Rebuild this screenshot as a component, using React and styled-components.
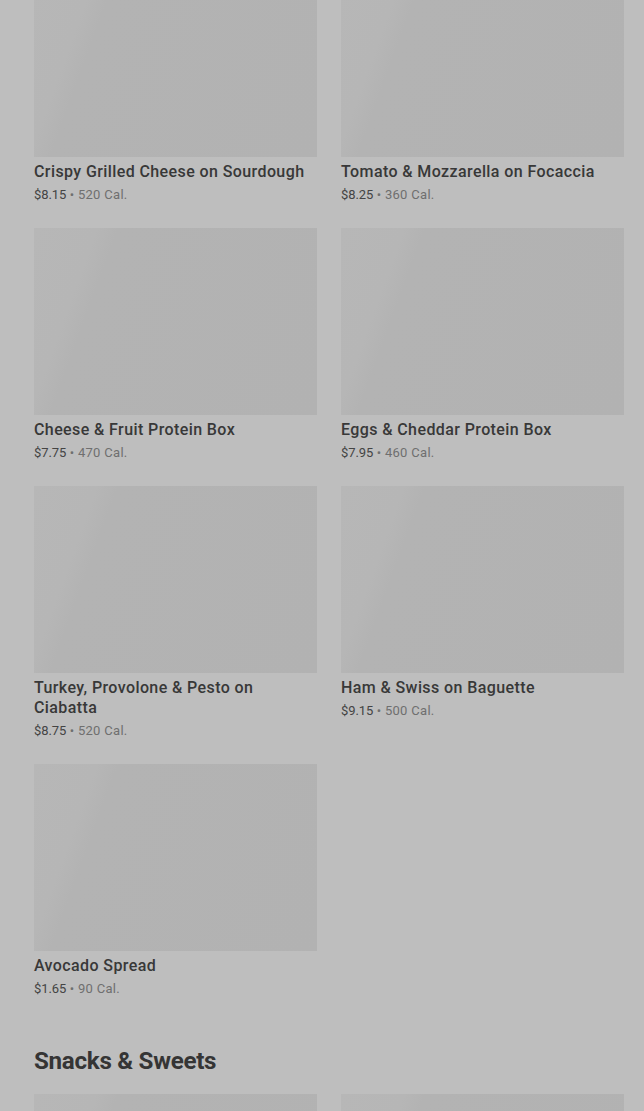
import React from "react";
import styled, { createGlobalStyle } from "styled-components";

const GlobalStyle = createGlobalStyle`
  html, body {
    margin: 0;
    padding: 0;
    background: #bebebe;
    font-family: Roboto, "Liberation Sans", Arial, sans-serif;
    overflow: hidden;
  }
`;

const Page = styled.main`
  padding: 0 20px 0 34px;
  margin-top: -30px;
`;

const Grid = styled.section`
  display: grid;
  grid-template-columns: 283px 283px;
  column-gap: 24px;
  row-gap: 24px;
  align-items: start;
`;

const Card = styled.article`
  display: flex;
  flex-direction: column;
`;

const Thumb = styled.div`
  height: 187px;
  background: linear-gradient(
    110deg,
    #b7b7b7 0%,
    #b6b6b6 18%,
    #b3b3b3 24%,
    #b2b2b2 100%
  );
`;

const Title = styled.h3`
  margin: 5px 0 0;
  font-size: 16px;
  line-height: 20px;
  font-weight: 500;
  color: #383838;
  letter-spacing: 0.4px;
`;

const Meta = styled.p`
  margin: 4px 0 0;
  font-size: 13px;
  line-height: 18px;
  color: #6f6f6f;
  letter-spacing: 0.3px;
`;

const Price = styled.span`
  color: #444444;
  letter-spacing: -0.1px;
`;

const Heading = styled.h2`
  margin: 47px 0 17px;
  font-size: 24.2px;
  line-height: 32px;
  font-weight: 700;
  color: #353535;
  letter-spacing: -0.3px;
`;

const items = [
  { name: "Crispy Grilled Cheese on Sourdough", price: "$8.15", cal: "520 Cal." },
  { name: "Tomato & Mozzarella on Focaccia", price: "$8.25", cal: "360 Cal." },
  { name: "Cheese & Fruit Protein Box", price: "$7.75", cal: "470 Cal." },
  { name: "Eggs & Cheddar Protein Box", price: "$7.95", cal: "460 Cal." },
  { name: "Turkey, Provolone & Pesto on Ciabatta", price: "$8.75", cal: "520 Cal." },
  { name: "Ham & Swiss on Baguette", price: "$9.15", cal: "500 Cal." },
  { name: "Avocado Spread", price: "$1.65", cal: "90 Cal." },
];

const MenuItem = ({ item }) => (
  <Card>
    <Thumb />
    {item.name && <Title>{item.name}</Title>}
    {item.price && (
      <Meta>
        <Price>{item.price}</Price> • {item.cal}
      </Meta>
    )}
  </Card>
);

export default function App() {
  return (
    <>
      <GlobalStyle />
      <Page>
        <Grid>
          {items.map((item, i) => (
            <MenuItem key={i} item={item} />
          ))}
        </Grid>
        <Heading>Snacks &amp; Sweets</Heading>
        <Grid>
          <MenuItem item={{}} />
          <MenuItem item={{}} />
        </Grid>
      </Page>
    </>
  );
}
